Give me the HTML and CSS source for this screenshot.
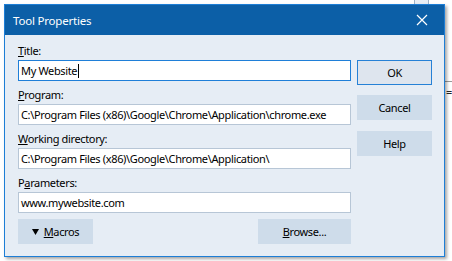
FILE: index.html
```html
<!DOCTYPE html>
<html lang="en">
<head>
  <meta charset="UTF-8" />
  <title>Tool Properties</title>
  <link rel="stylesheet" href="styles.css">
</head>
<body>
  <div class="behind-tab"></div>
  <div class="behind-window">
    <span class="behind-glyph">=</span>
  </div>

  <div class="dialog">
    <div class="titlebar">
      <span class="title">Tool Properties</span>
      <svg class="close" width="12" height="12" viewBox="0 0 12 12">
        <path d="M1 1 L11 11 M11 1 L1 11" stroke="#ffffff" stroke-width="1.2" fill="none"/>
      </svg>
    </div>

    <div class="content">
      <div class="fields">
        <div class="label"><u>T</u>itle:</div>
        <div class="textbox focused">My Website<span class="caret"></span></div>

        <div class="label"><u>P</u>rogram:</div>
        <div class="textbox">C:\Program Files (x86)\Google\Chrome\Application\chrome.exe</div>

        <div class="label"><u>W</u>orking directory:</div>
        <div class="textbox">C:\Program Files (x86)\Google\Chrome\Application\</div>

        <div class="label">P<u>a</u>rameters:</div>
        <div class="textbox">www.mywebsite.com</div>

        <div class="bottom-row">
          <div class="btn macros">
            <svg class="arrow" width="7" height="6" viewBox="0 0 7 6">
              <path d="M0 0 H7 L3.5 6 Z" fill="#000"/>
            </svg>
            <span><u>M</u>acros</span>
          </div>
          <div class="btn browse"><u>B</u>rowse...</div>
        </div>
      </div>

      <div class="buttons">
        <div class="btn default">OK</div>
        <div class="btn cancel">Cancel</div>
        <div class="btn help">Help</div>
      </div>
    </div>
  </div>
</body>
</html>
```

FILE: styles.css
```css
body {
  margin: 0;
  padding: 4px 0 0 4px;
  box-sizing: border-box;
  background-color: #ffffff;
  font-family: "Noto Sans", "Open Sans", sans-serif;
  font-size: 11px;
  letter-spacing: -0.35px;
  color: #000;
  position: relative;
  width: 452px;
  height: 261px;
  overflow: hidden;
}

/* bits of other windows peeking out */
.behind-tab {
  position: absolute;
  left: 414px;
  top: -2px;
  width: 13px;
  height: 6px;
  background-color: #e8eef5;
  border: 1px solid #9fb3c8;
}

.behind-window {
  position: absolute;
  left: 445px;
  top: 81px;
  width: 7px;
  height: 170px;
  border-top: 1px solid #9a9a9a;
}

.behind-glyph {
  position: absolute;
  left: 1px;
  top: 3px;
  font-size: 11px;
  line-height: 14px;
  color: #222;
}

.dialog {
  position: relative;
  width: 441px;
  height: 253px;
  box-sizing: border-box;
  border: 1px solid #1d7ed6;
  background-color: #e6edf5;
  box-shadow: 2px 2px 3px rgba(0, 0, 0, 0.35);
}

.titlebar {
  height: 30px;
  background-color: #0c5fa7;
  display: flex;
  align-items: center;
  justify-content: space-between;
  padding: 0 16px 0 8px;
}

.title {
  color: #ffffff;
  font-size: 11.5px;
  letter-spacing: -0.2px;
}

.close {
  display: block;
}

.content {
  display: grid;
  grid-template-columns: 333px 75px;
  gap: 6px;
  padding: 2px 0 0 13px;
}

.label {
  height: 23px;
  box-sizing: border-box;
  padding-top: 6px;
  line-height: 16px;
}

.textbox {
  height: 21px;
  box-sizing: border-box;
  border: 1px solid #b7c6d6;
  background-color: #ffffff;
  padding-left: 2px;
  line-height: 19px;
  white-space: nowrap;
  overflow: hidden;
}

.textbox.focused {
  border-color: #1f7fd8;
}

.caret {
  display: inline-block;
  width: 1px;
  height: 14px;
  margin-left: 1px;
  background-color: #000;
  vertical-align: -3px;
}

.bottom-row {
  display: flex;
  justify-content: space-between;
  margin-top: 6px;
}

.btn {
  height: 25px;
  box-sizing: border-box;
  background-color: #cedcea;
  display: flex;
  align-items: center;
  justify-content: center;
}

.macros {
  width: 75px;
  gap: 5px;
}

.arrow {
  display: block;
}

.browse {
  width: 93px;
}

.buttons {
  padding-top: 23px;
  display: flex;
  flex-direction: column;
}

.btn.default {
  background-color: #dee5ee;
  border: 1px solid #2681d6;
}

.btn.cancel {
  margin-top: 10px;
}

.btn.help {
  margin-top: 11px;
}
```
